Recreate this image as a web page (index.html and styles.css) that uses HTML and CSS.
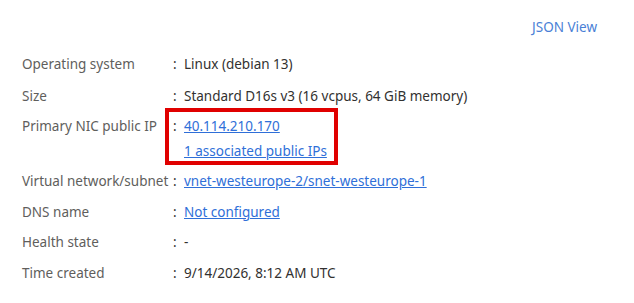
FILE: index.html
```html
<!DOCTYPE html>
<html>
<head>
<meta charset="utf-8">
<link rel="stylesheet" href="styles.css">
</head>
<body>
<div class="panel">
  <div class="toolbar"><a class="json-link" href="#">JSON View</a></div>
  <div class="props">
    <div class="row row-first"><div class="label">Operating system</div><div class="colon">:</div><div class="value">Linux (debian 13)</div></div>
    <div class="row"><div class="label">Size</div><div class="colon">:</div><div class="value">Standard D16s v3 (16 vcpus, 64 GiB memory)</div></div>
    <div class="row row-multi"><div class="label">Primary NIC public IP</div><div class="colon">:</div><div class="value multi"><a href="#">40.114.210.170</a><a href="#">1 associated public IPs</a></div><div class="highlight"></div></div>
    <div class="row"><div class="label">Virtual network/subnet</div><div class="colon">:</div><div class="value"><a href="#">vnet-westeurope-2/snet-westeurope-1</a></div></div>
    <div class="row"><div class="label">DNS name</div><div class="colon">:</div><div class="value"><a href="#">Not configured</a></div></div>
    <div class="row"><div class="label">Health state</div><div class="colon">:</div><div class="value">-</div></div>
    <div class="row"><div class="label">Time created</div><div class="colon">:</div><div class="value">9/14/2026, 8:12 AM UTC</div></div>
  </div>
</div>
</body>
</html>
```

FILE: styles.css
```css
html, body {
  margin: 0;
  background: #ffffff;
}
body {
  font-family: "Noto Sans", "Open Sans", sans-serif;
  font-size: 13.5px;
  color: #323130;
}
.panel {
  padding: 18px 37px 0 22px;
}
.toolbar {
  display: flex;
  justify-content: flex-end;
  height: 30px;
}
.json-link {
  color: #4a7fd6;
  text-decoration: none;
}
.props {
  display: flex;
  flex-direction: column;
  padding-top: 1px;
}
.row {
  display: grid;
  grid-template-columns: 151px 11px 1fr;
  line-height: 18.5px;
  padding: 6px 0;
  position: relative;
}
.row-first {
  padding-bottom: 7px;
}
.label {
  color: #605e5c;
}
.colon {
  color: #323130;
}
.value a {
  color: #2f6fd8;
  text-decoration: underline;
}
.multi {
  display: flex;
  flex-direction: column;
  gap: 6px;
}
.highlight {
  position: absolute;
  left: 143px;
  top: -3px;
  width: 165px;
  height: 49px;
  border: 4px solid #e00000;
}
```
